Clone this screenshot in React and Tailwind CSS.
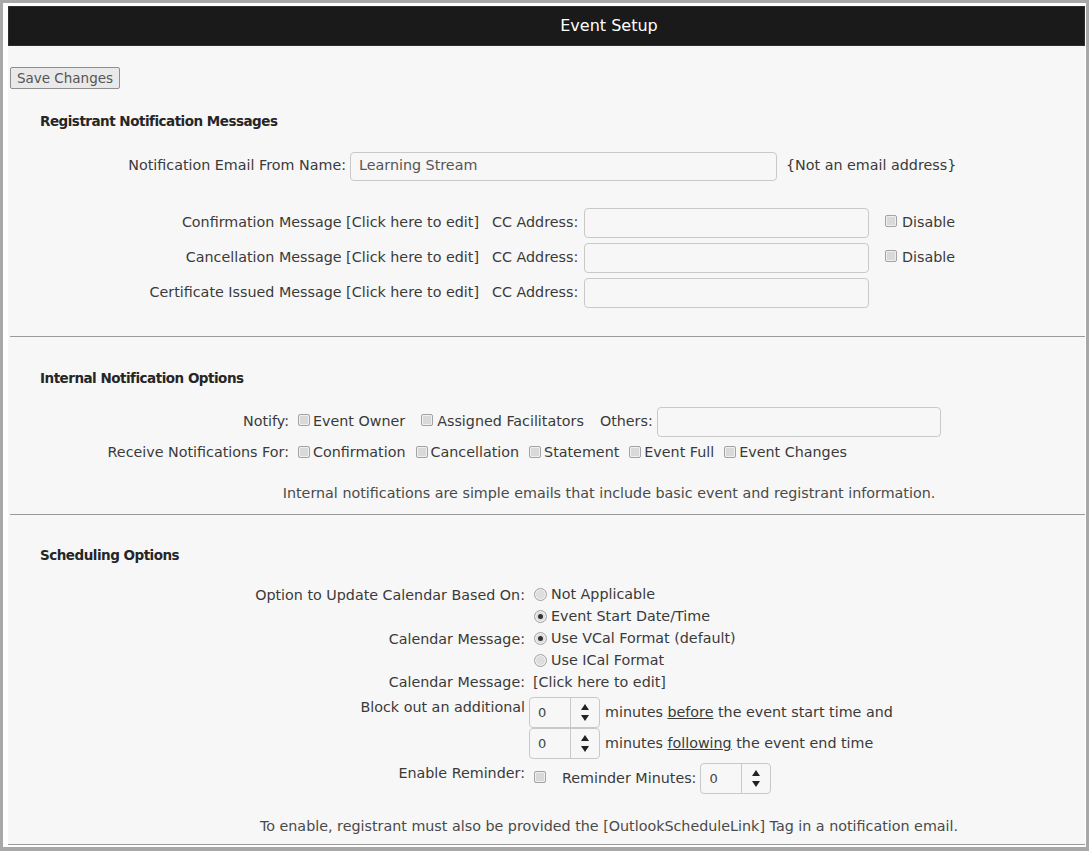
import React from 'react';

const Check = ({ className = '' }) => (
    <span className={`inline-block w-[12px] h-[12px] shrink-0 rounded-[2px] border border-[#a3a3a3] bg-[#d9d9d9] shadow-[inset_0_0_0_1px_#efefef] ${className}`} />
);

const Radio = ({ checked }) => (
    <span className="inline-flex w-[13px] h-[13px] shrink-0 items-center justify-center rounded-full border border-[#a3a3a3] bg-[#dedede] shadow-[inset_0_0_0_1px_#f2f2f2] mb-[1px]">
        {checked && <span className="w-[5px] h-[5px] rounded-full bg-[#333]" />}
    </span>
);

const Spinner = ({ value = 0 }) => (
    <div className="flex h-[31px] w-[71px] shrink-0 rounded-[4px] border border-[#c9c9c9] bg-[#f7f7f7]">
        <div className="flex w-[40px] items-center pl-[8px] text-[13px] text-[#444]">{value}</div>
        <div className="flex w-[29px] flex-col items-center justify-center gap-[5px] border-l border-[#c9c9c9]">
            <svg width="8" height="6" viewBox="0 0 8 6"><path d="M4 0L8 6H0Z" fill="#222" /></svg>
            <svg width="8" height="6" viewBox="0 0 8 6"><path d="M0 0H8L4 6Z" fill="#222" /></svg>
        </div>
    </div>
);

const TextBox = ({ width, value }) => (
    <div className={`flex h-[30px] ${width} shrink-0 items-center rounded-[4px] border border-[#c9c9c9] bg-[#f7f7f7] px-[8px] text-[#555]`}>
        {value}
    </div>
);

const Heading = ({ children, className = '' }) => (
    <h2 className={`pl-[32px] h-[20px] leading-[20px] text-[13.5px] tracking-[-0.5px] font-bold text-[#262626] ${className}`}>{children}</h2>
);

const ccRows = [
    { name: 'Confirmation Message', disable: true },
    { name: 'Cancellation Message', disable: true },
    { name: 'Certificate Issued Message', disable: false },
];

const receiveFor = ['Confirmation', 'Cancellation', 'Statement', 'Event Full', 'Event Changes'];

export default function App() {
    return (
        <div className="w-[1089px] h-[851px] overflow-hidden bg-[#a8a8a8] pt-[3px] px-[3px] pb-[4px] font-['DejaVu_Sans',sans-serif] text-[14.3px] text-[#3a3a3a]">
            <div className="flex h-full flex-col bg-white pt-[3px] pl-[5px] pr-[1px] pb-[2px]">
                <div className="flex h-[40px] shrink-0 items-center justify-center border border-[#2e2e2e] bg-[#1a1a1a] pl-[125px] text-[16px] text-white">
                    Event Setup
                </div>

                <div className="flex-1 border-b border-[#9a9a9a] bg-[#f7f7f7]">
                    <button className="ml-[2px] mt-[21px] block h-[22px] w-[110px] rounded-[2px] border border-[#8e8e8e] bg-[#e9e9e9] text-[13.5px] text-[#555]">
                        Save Changes
                    </button>

                    {/* Registrant messages */}
                    <Heading className="mt-[22px]">Registrant Notification Messages</Heading>

                    <div className="mt-[20px] flex h-[29px] items-center pt-[1px]">
                        <div className="w-[338px] shrink-0 whitespace-nowrap text-right">Notification Email From Name:</div>
                        <div className="ml-[4px] flex h-[29px] w-[427px] shrink-0 items-center rounded-[4px] border border-[#c9c9c9] bg-[#f7f7f7] px-[8px] text-[#555]">
                            Learning Stream
                        </div>
                        <div className="ml-[9px] whitespace-nowrap">{'{Not an email address}'}</div>
                    </div>

                    <div className="mt-[27px] flex flex-col gap-[5px]">
                        {ccRows.map((row) => (
                            <div key={row.name} className="flex h-[30px] items-center pt-[1px]">
                                <div className="w-[471px] shrink-0 whitespace-nowrap text-right">
                                    {row.name} [Click here to edit]
                                </div>
                                <div className="ml-[13px] w-[92px] shrink-0 whitespace-nowrap">CC Address:</div>
                                <TextBox width="w-[285px]" />
                                {row.disable && (
                                    <div className="ml-[16px] flex items-center gap-[5px]">
                                        <Check className="mb-[3px]" />
                                        <span>Disable</span>
                                    </div>
                                )}
                            </div>
                        ))}
                    </div>

                    <hr className="ml-[2px] mt-[29px] border-0 border-t border-[#9a9a9a]" />

                    {/* Internal notifications */}
                    <Heading className="mt-[31px]">Internal Notification Options</Heading>

                    <div className="mt-[19px] flex h-[30px] items-center whitespace-nowrap">
                        <div className="w-[281px] shrink-0 text-right">Notify:</div>
                        <div className="ml-[9px] flex items-center gap-[3px]">
                            <Check className="mb-[4px]" />
                            <span>Event Owner</span>
                        </div>
                        <div className="ml-[16px] flex items-center gap-[4px]">
                            <Check className="mb-[4px]" />
                            <span>Assigned Facilitators</span>
                        </div>
                        <div className="ml-[16px]">Others:</div>
                        <TextBox width="w-[284px] ml-[4px]" />
                    </div>

                    <div className="flex h-[30px] items-center whitespace-nowrap pt-[2px]">
                        <div className="w-[281px] shrink-0 text-right">Receive Notifications For:</div>
                        <div className="ml-[9px] flex items-center gap-[10px]">
                            {receiveFor.map((item) => (
                                <div key={item} className="flex items-center gap-[3px]">
                                    <Check className="mb-[3px]" />
                                    <span>{item}</span>
                                </div>
                            ))}
                        </div>
                    </div>

                    <p className="mt-[16px] h-[20px] whitespace-nowrap pl-[125px] text-center leading-[20px] text-[#4a4a4a]">
                        Internal notifications are simple emails that include basic event and registrant information.
                    </p>

                    <hr className="ml-[2px] mt-[11px] border-0 border-t border-[#9a9a9a]" />

                    {/* Scheduling */}
                    <Heading className="mt-[30px]">Scheduling Options</Heading>

                    <div className="mt-[19px] whitespace-nowrap">
                        <div className="flex">
                            <div className="w-[517px] shrink-0 text-right leading-[22px]">Option to Update Calendar Based On:</div>
                            <div className="ml-[9px] flex flex-col">
                                <div className="flex h-[22px] items-center gap-[4px]"><Radio /> Not Applicable</div>
                                <div className="flex h-[22px] items-center gap-[4px]"><Radio checked /> Event Start Date/Time</div>
                            </div>
                        </div>
                        <div className="flex">
                            <div className="w-[517px] shrink-0 text-right leading-[22px]">Calendar Message:</div>
                            <div className="ml-[9px] flex flex-col">
                                <div className="flex h-[22px] items-center gap-[4px]"><Radio checked /> Use VCal Format (default)</div>
                                <div className="flex h-[22px] items-center gap-[4px]"><Radio /> Use ICal Format</div>
                            </div>
                        </div>
                        <div className="flex h-[22px] items-center">
                            <div className="w-[517px] shrink-0 text-right">Calendar Message:</div>
                            <div className="ml-[8px]">[Click here to edit]</div>
                        </div>

                        <div className="mt-[3px] flex">
                            <div className="w-[517px] shrink-0 pt-[1px] text-right leading-[18px]">Block out an additional</div>
                            <div className="ml-[4px] flex flex-col">
                                <div className="flex items-center gap-[5px]">
                                    <Spinner />
                                    <span>minutes <span className="underline">before</span> the event start time and</span>
                                </div>
                                <div className="flex items-center gap-[5px]">
                                    <Spinner />
                                    <span>minutes <span className="underline">following</span> the event end time</span>
                                </div>
                            </div>
                        </div>

                        <div className="mt-[4px] flex">
                            <div className="w-[517px] shrink-0 pt-[1px] text-right leading-[18px]">Enable Reminder:</div>
                            <div className="ml-[9px] flex items-center">
                                <Check className="mb-[4px]" />
                                <span className="ml-[16px] mr-[4px]">Reminder Minutes:</span>
                                <Spinner />
                            </div>
                        </div>
                    </div>

                    <p className="mt-[22px] h-[20px] whitespace-nowrap pl-[125px] text-center leading-[20px] text-[#4a4a4a]">
                        To enable, registrant must also be provided the [OutlookScheduleLink] Tag in a notification email.
                    </p>
                </div>
            </div>
        </div>
    );
}
